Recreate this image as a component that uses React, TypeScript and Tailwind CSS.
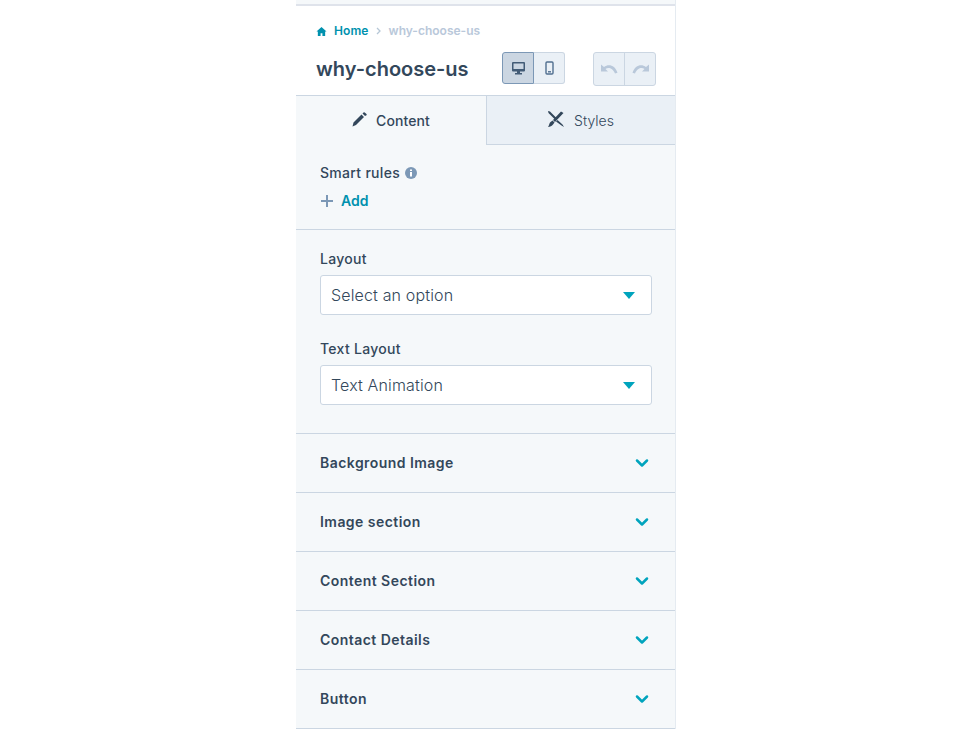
import React from 'react';
import { ChevronDown } from 'lucide-react';

const FONT = "font-['Inter','Open_Sans',sans-serif]";
const SECTIONS = ['Background Image', 'Image section', 'Content Section', 'Contact Details', 'Button'];

function SelectField({ label, value }: { label: string; value: string }) {
  return (
    <div>
      <div className="text-[14px] leading-[18px] font-medium tracking-[0.3px] text-[#33475b]">{label}</div>
      <div className="mt-[7px] h-10 flex items-center justify-between pl-[10px] pr-[16px] bg-white border border-[#cbd6e2] rounded-[3px] text-[16px] font-light tracking-[0.15px] text-[#33475b]">
        <span>{value}</span>
        <svg width="12" height="7" viewBox="0 0 12 7"><path d="M0 0h12L6 7z" fill="#00a4bd" /></svg>
      </div>
    </div>
  );
}

export default function App() {
  return (
    <div className={`w-[973px] h-[730px] bg-white overflow-hidden ${FONT}`}>
      <div className="ml-[296px] w-[380px] h-[729px] border-r border-[#e5ebf1] flex flex-col">
        {/* Top strip */}
        <div className="h-[6px] bg-[#f5f8fa] border-b-2 border-[#dfe3eb]" />

        {/* Header */}
        <div className="h-[89px] bg-white pl-[20px] pr-[19px] pt-[18px]">
          <div className="flex items-center h-[14px] text-[12px] font-semibold">
            <svg width="11" height="11" viewBox="0 0 12 12" fill="#0091ae"><path d="M6 1 0.5 6H2v5h3V8h2v3h3V6h1.500z" /></svg>
            <span className="ml-[7px] tracking-[0.1px] text-[#0091ae]">Home</span>
            <svg className="mx-[7px]" width="6" height="8" viewBox="0 0 6 8" fill="none" stroke="#b6c7d6" strokeWidth="1.300"><path d="m1 1 3 3-3 3" /></svg>
            <span className="text-[#b9c8da]">why-choose-us</span>
          </div>
          <div className="mt-[14px] flex items-start">
            <h1 className="mt-[1px] text-[20px] leading-[32px] font-semibold text-[#33475b]">why-choose-us</h1>
            <div className="ml-auto flex items-start">
              <div className="flex h-8 mr-[28px] rounded-[3px]">
                <div className="w-8 flex items-center justify-center bg-[#cbd6e2] border border-[#7c98b6] rounded-l-[3px]">
                  <svg width="13" height="13" viewBox="0 0 13 13" fill="#425b76"><path d="M1 0h11a1 1 0 0 1 1 1v7.500a1 1 0 0 1-1 1H1a1 1 0 0 1-1-1V1a1 1 0 0 1 1-1zm.500 1.500V7h10V1.500zM5 9.500h3V11h2v1.500H3V11h2z" fillRule="evenodd" /></svg>
                </div>
                <div className="w-[31px] flex items-center justify-center bg-[#eaf0f6] border-y border-r border-[#cbd6e2] rounded-r-[3px]">
                  <svg width="9" height="14" viewBox="0 0 9 14" fill="none" stroke="#516f90" strokeWidth="1.400"><rect x="1" y="1" width="7" height="12" rx="1" /><path d="M3 10.800h3" /></svg>
                </div>
              </div>
              <div className="flex h-[34px] rounded-[3px] bg-[#eaf0f6] border border-[#cbd6e2]">
                <div className="w-[31px] flex items-center justify-center border-r border-[#cbd6e2]">
                  <svg width="17" height="10" viewBox="0 0 17 10" fill="#b9c8da"><path d="M0 .5v7h7L4.500 5C7 3.300 11.500 3.500 14 9.500l2.500-.8C14 1 7.500-.5 3 3z" /></svg>
                </div>
                <div className="w-[30px] flex items-center justify-center">
                  <svg width="17" height="10" viewBox="0 0 17 10" fill="#b9c8da"><path d="M17 .5v7h-7L12.500 5C10 3.300 5.500 3.500 3 9.500L.5 8.700C3 1 9.500-.5 14 3z" /></svg>
                </div>
              </div>
            </div>
          </div>
        </div>

        {/* Tabs */}
        <div className="flex h-[50px] border-t border-[#cbd6e2]">
          <div className="w-[190px] flex items-center justify-center bg-[#f5f8fa] text-[14px] font-medium tracking-[0.1px] text-[#33475b]">
            <svg className="mr-[9px] mb-[3px]" width="15" height="15" viewBox="0 0 15 15" fill="#33475b"><path d="M1.500 10.500 9.500 2.500 12 5l-8 8-3.500 1.500zM10.500 1.500l1-1a1 1 0 0 1 1.200 0L14.500 2a1 1 0 0 1 0 1.200L13 4z" /></svg>
            <span>Content</span>
          </div>
          <div className="flex-1 flex items-center justify-center bg-[#eaf0f6] border-l border-b border-[#cbd6e2] text-[14px] font-light text-[#33475b]">
            <svg className="mr-[10px] mb-[3px]" width="16" height="16" viewBox="0 0 16 16" fill="#33475b"><path d="M0 0 2 .5l6 6-1.500 1.500-6-6zM9.500 9l5 4.500 1.500 2.500-2.500-1.500L8 10.500zM13 .5 15.500 2 7 11l-2-2zM4.500 9.500l2 2-1.500 2c-1 1.500-3 2.500-5 2.500 1-1 1-3 2-4.500z" /></svg>
            <span>Styles</span>
          </div>
        </div>

        {/* Settings body */}
        <div className="flex-1 bg-[#f5f8fa] flex flex-col">
          <div className="h-[85px] border-b border-[#cbd6e2] pl-[24px] pt-[19px]">
            <div className="flex items-center text-[14px] leading-[18px] font-medium tracking-[0.3px] text-[#33475b]">
              <span>Smart rules</span>
              <svg className="ml-[5px]" width="12" height="12" viewBox="0 0 12 12"><circle cx="6" cy="6" r="6" fill="#7c98b6" /><path d="M5 5h2v4.500H5zM5 2.500h2v1.600H5z" fill="#fff" /></svg>
            </div>
            <div className="mt-[10px] flex items-center text-[14px] leading-[18px] font-semibold text-[#0091ae]">
              <svg className="ml-[1px]" width="12" height="12" viewBox="0 0 12 12" fill="#7c98b6"><path d="M5 0h2v5h5v2H7v5H5V7H0V5h5z" /></svg>
              <span className="ml-[8px]">Add</span>
            </div>
          </div>

          <div className="h-[204px] border-b border-[#cbd6e2] pl-[24px] pr-[23px] pt-[20px] flex flex-col gap-[25px]">
            <SelectField label="Layout" value="Select an option" />
            <SelectField label="Text Layout" value="Text Animation" />
          </div>

          {SECTIONS.map((title) => (
            <div key={title} className="h-[59px] shrink-0 border-b border-[#cbd6e2] pl-[24px] pr-[23px] pb-[2px] flex items-center justify-between">
              <span className="text-[14px] font-semibold tracking-[0.45px] text-[#33475b]">{title}</span>
              <ChevronDown className="w-5 h-5 mt-[2px] text-[#00a4bd]" strokeWidth={3} />
            </div>
          ))}
        </div>
      </div>
    </div>
  );
}
